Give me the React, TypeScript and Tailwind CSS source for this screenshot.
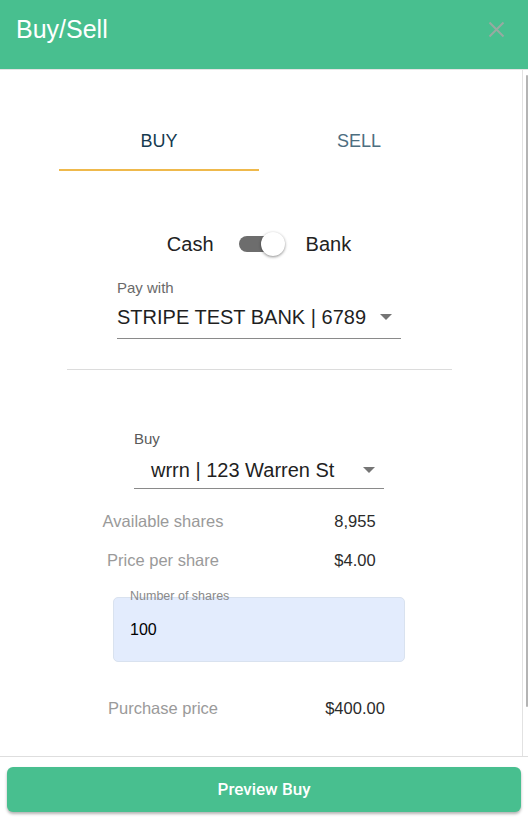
import React, { useState } from "react";

const Caret: React.FC = () => (
  <svg width="12" height="6" viewBox="0 0 12 6" className="shrink-0">
    <path d="M0 0 L12 0 L6 6 Z" fill="#757575" />
  </svg>
);

const InfoRow: React.FC<{ label: string; value: string }> = ({ label, value }) => (
  <div className="grid h-[39px] grid-cols-2 items-center text-center text-[16.5px]">
    <span className="text-[#9a9a9a]">{label}</span>
    <span className="text-[#2b2b2b]">{value}</span>
  </div>
);

const App: React.FC = () => {
  const [tab, setTab] = useState<"buy" | "sell">("buy");
  const [bank, setBank] = useState(true);
  const [shares, setShares] = useState("100");

  return (
    <div className="flex h-[821px] w-[528px] flex-col overflow-hidden bg-white font-['Liberation_Sans',Arial,sans-serif]">
      <div className="flex h-[70px] shrink-0 items-center justify-between border-b border-[#e4e4e4] bg-[#48bf8f] pb-[10px] pl-4 pr-[23px]">
        <h1 className="text-[25px] leading-none text-white">Buy/Sell</h1>
        <svg width="17" height="17" viewBox="0 0 17 17">
          <path d="M1.5 1.5 L15.5 15.5 M15.5 1.5 L1.5 15.5" stroke="#97aaa1" strokeWidth="2" />
        </svg>
      </div>

      <div className="flex min-h-0 flex-1">
        <div className="flex-1 pr-[4px]">
          <div className="mx-auto mt-[40px] flex w-[400px]">
            <button
              className={`flex h-[61px] flex-1 items-center justify-center pt-[3px] text-[18px] ${
                tab === "buy"
                  ? "border-b-2 border-[#efb94c] text-[#163a4f]"
                  : "border-b-2 border-transparent text-[#4d6e80]"
              }`}
              onClick={() => setTab("buy")}
            >
              BUY
            </button>
            <button
              className={`flex h-[61px] flex-1 items-center justify-center pt-[3px] text-[18px] ${
                tab === "sell"
                  ? "border-b-2 border-[#efb94c] text-[#163a4f]"
                  : "border-b-2 border-transparent text-[#4d6e80]"
              }`}
              onClick={() => setTab("sell")}
            >
              SELL
            </button>
          </div>

          <div className="mt-[59px] flex h-[28px] items-center justify-center text-[20px] text-[#222]">
            <span>Cash</span>
            <button
              className="relative ml-[25px] h-[24px] w-[46px]"
              onClick={() => setBank(!bank)}
            >
              <span className="absolute left-0 top-[4px] h-[16px] w-[42px] rounded-full bg-[#6d6d6d]" />
              <span
                className={`absolute top-0 h-[24px] w-[24px] rounded-full bg-white shadow-[0_1px_3px_rgba(0,0,0,0.45)] ${
                  bank ? "left-[22px]" : "left-0"
                }`}
              />
            </button>
            <span className="ml-[21px]">Bank</span>
          </div>

          <div className="mx-auto mt-[22px] w-[284px]">
            <div className="text-[15px] leading-[16px] text-[#6a6a6a]">Pay with</div>
            <div className="mt-[9px] flex items-center justify-between border-b border-[#8a8a8a] pb-[9px] pr-[9px]">
              <span className="text-[20px] leading-[24px] text-[#1f1f1f]">STRIPE TEST BANK | 6789</span>
              <Caret />
            </div>
          </div>

          <div className="mx-auto mt-[30px] h-px w-[385px] bg-[#dcdcdc]" />

          <div className="mx-auto mt-[61px] w-[250px]">
            <div className="text-[15px] leading-[16px] text-[#5a5a5a]">Buy</div>
            <div className="mt-[11px] flex items-center justify-between border-b border-[#8a8a8a] pb-[6px] pl-[17px] pr-[9px]">
              <span className="text-[20px] leading-[24px] text-[#1f1f1f]">wrrn | 123 Warren St</span>
              <Caret />
            </div>
          </div>

          <div className="mx-auto mt-[13px] w-[384px]">
            <InfoRow label="Available shares" value="8,955" />
            <InfoRow label="Price per share" value="$4.00" />
          </div>

          <div className="relative mx-auto mt-[17px] flex h-[65px] w-[292px] items-center rounded-[5px] border border-[#d9e2ef] bg-[#e3ecfd] pl-[16px]">
            <span className="absolute left-[16px] top-[-10px] text-[12.5px] leading-[16px] text-[#8a8a8a]">
              Number of shares
            </span>
            <input
              className="w-full bg-transparent text-[16px] text-black outline-none"
              value={shares}
              onChange={(e) => setShares(e.target.value)}
            />
          </div>

          <div className="mx-auto mt-[27px] w-[384px]">
            <InfoRow label="Purchase price" value="$400.00" />
          </div>
        </div>

        <div className="flex w-[6px] flex-col border-l border-[#e2e2e2] pb-[49px] pl-[3px] pt-[5px]">
          <div className="flex-1 rounded-full bg-[#b4b4b4]" />
        </div>
      </div>

      <div className="shrink-0 border-t border-[#dedede] px-[7px] pb-[9px] pt-[10px]">
        <button className="flex h-[45px] w-full items-center justify-center rounded-[6px] bg-[#48bf8f] font-['Roboto',sans-serif] text-[17px] font-medium text-white shadow-[0_2px_3px_rgba(0,0,0,0.3)]">
          Preview Buy
        </button>
      </div>
    </div>
  );
};

export default App;
